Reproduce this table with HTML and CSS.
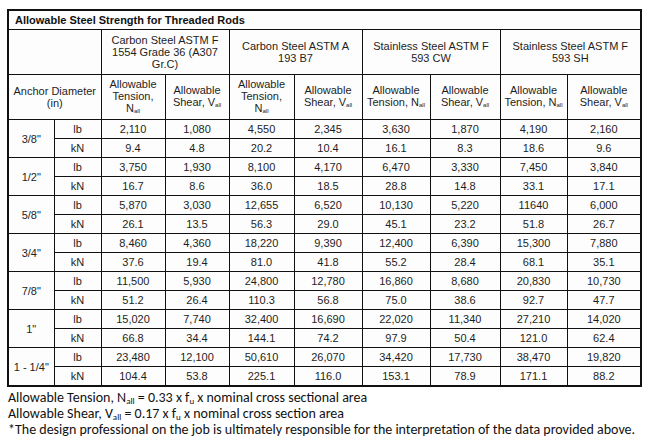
FILE: index.html
```html
<!DOCTYPE html>
<html>
<head>
<meta charset="utf-8">
<link rel="stylesheet" href="styles.css">
</head>
<body>
<table class="tbl">
  <colgroup>
    <col class="c1"><col class="c2"><col class="c3"><col class="c4"><col class="c5"><col class="c6"><col class="c7"><col class="c8"><col class="c9"><col class="c10">
  </colgroup>
  <tr class="title-row"><td colspan="10" class="title">Allowable Steel Strength for Threaded Rods</td></tr>
  <tr class="h1">
    <td colspan="2"></td>
    <td colspan="2">Carbon Steel ASTM F<br>1554 Grade 36 (A307<br>Gr.C)</td>
    <td colspan="2">Carbon Steel ASTM A<br>193 B7</td>
    <td colspan="2">Stainless Steel ASTM F<br>593 CW</td>
    <td colspan="2">Stainless Steel ASTM F<br>593 SH</td>
  </tr>
  <tr class="h2">
    <td colspan="2">Anchor Diameter<br>(in)</td>
    <td>Allowable<br>Tension,<br>N<sub>all</sub></td>
    <td>Allowable<br>Shear, V<sub>all</sub></td>
    <td>Allowable<br>Tension,<br>N<sub>all</sub></td>
    <td>Allowable<br>Shear, V<sub>all</sub></td>
    <td>Allowable<br>Tension, N<sub>all</sub></td>
    <td>Allowable<br>Shear, V<sub>all</sub></td>
    <td>Allowable<br>Tension, N<sub>all</sub></td>
    <td>Allowable<br>Shear, V<sub>all</sub></td>
  </tr>
  <tr><td rowspan="2">3/8"</td><td>lb</td><td>2,110</td><td>1,080</td><td>4,550</td><td>2,345</td><td>3,630</td><td>1,870</td><td>4,190</td><td>2,160</td></tr>
  <tr><td>kN</td><td>9.4</td><td>4.8</td><td>20.2</td><td>10.4</td><td>16.1</td><td>8.3</td><td>18.6</td><td>9.6</td></tr>
  <tr><td rowspan="2">1/2"</td><td>lb</td><td>3,750</td><td>1,930</td><td>8,100</td><td>4,170</td><td>6,470</td><td>3,330</td><td>7,450</td><td>3,840</td></tr>
  <tr><td>kN</td><td>16.7</td><td>8.6</td><td>36.0</td><td>18.5</td><td>28.8</td><td>14.8</td><td>33.1</td><td>17.1</td></tr>
  <tr><td rowspan="2">5/8"</td><td>lb</td><td>5,870</td><td>3,030</td><td>12,655</td><td>6,520</td><td>10,130</td><td>5,220</td><td>11640</td><td>6,000</td></tr>
  <tr><td>kN</td><td>26.1</td><td>13.5</td><td>56.3</td><td>29.0</td><td>45.1</td><td>23.2</td><td>51.8</td><td>26.7</td></tr>
  <tr><td rowspan="2">3/4"</td><td>lb</td><td>8,460</td><td>4,360</td><td>18,220</td><td>9,390</td><td>12,400</td><td>6,390</td><td>15,300</td><td>7,880</td></tr>
  <tr><td>kN</td><td>37.6</td><td>19.4</td><td>81.0</td><td>41.8</td><td>55.2</td><td>28.4</td><td>68.1</td><td>35.1</td></tr>
  <tr><td rowspan="2">7/8"</td><td>lb</td><td>11,500</td><td>5,930</td><td>24,800</td><td>12,780</td><td>16,860</td><td>8,680</td><td>20,830</td><td>10,730</td></tr>
  <tr><td>kN</td><td>51.2</td><td>26.4</td><td>110.3</td><td>56.8</td><td>75.0</td><td>38.6</td><td>92.7</td><td>47.7</td></tr>
  <tr><td rowspan="2">1"</td><td>lb</td><td>15,020</td><td>7,740</td><td>32,400</td><td>16,690</td><td>22,020</td><td>11,340</td><td>27,210</td><td>14,020</td></tr>
  <tr><td>kN</td><td>66.8</td><td>34.4</td><td>144.1</td><td>74.2</td><td>97.9</td><td>50.4</td><td>121.0</td><td>62.4</td></tr>
  <tr><td rowspan="2">1 - 1/4"</td><td>lb</td><td>23,480</td><td>12,100</td><td>50,610</td><td>26,070</td><td>34,420</td><td>17,730</td><td>38,470</td><td>19,820</td></tr>
  <tr><td>kN</td><td>104.4</td><td>53.8</td><td>225.1</td><td>116.0</td><td>153.1</td><td>78.9</td><td>171.1</td><td>88.2</td></tr>
</table>
<div class="notes">
  <p>Allowable Tension, N<span class="sb">all</span> = 0.33 x f<span class="sb">u</span> x nominal cross sectional area</p>
  <p>Allowable Shear, V<span class="sb">all</span> = 0.17 x f<span class="sb">u</span> x nominal cross section area</p>
  <p>*The design professional on the job is ultimately responsible for the interpretation of the data provided above.</p>
</div>
</body>
</html>
```
FILE: styles.css
```css
html, body {
  margin: 0;
  padding: 0;
  background: #fff;
}
body {
  padding: 9px 0 0 7px;
}
.tbl {
  border-collapse: collapse;
  table-layout: fixed;
  width: 633px;
  font-family: "Liberation Sans", Arial, sans-serif;
  font-size: 11px;
  color: #1e1e1e;
  border: 2px solid #111;
}
.c1 { width: 46px; }
.c2 { width: 47px; }
.c3 { width: 64px; }
.c4 { width: 64px; }
.c5 { width: 65px; }
.c6 { width: 68px; }
.c7 { width: 68px; }
.c8 { width: 70px; }
.c9 { width: 67px; }
.c10 { width: 74px; }
.tbl td {
  border: 1px solid #111;
  text-align: center;
  vertical-align: middle;
  padding: 0 2px;
  height: 18px;
  line-height: 12px;
  background: #fdfdfd;
}
.tbl td.title {
  text-align: left;
  font-weight: bold;
  padding-left: 6px;
  height: 18px;
  color: #111;
}
.tbl tr.h1 td { height: 44px; }
.tbl tr.h2 td { height: 44px; }
.tbl sub {
  font-size: 6px;
  vertical-align: baseline;
  position: relative;
  top: 1px;
}
.notes {
  margin-top: 3px;
  margin-left: 1px;
  font-family: Carlito, Lato, "Open Sans", sans-serif;
  font-size: 14px;
  color: #111;
}
.notes p {
  margin: 0;
  line-height: 16px;
}
.notes .sb {
  font-size: 9px;
  line-height: 9px;
  position: relative;
  top: 2px;
}
```
